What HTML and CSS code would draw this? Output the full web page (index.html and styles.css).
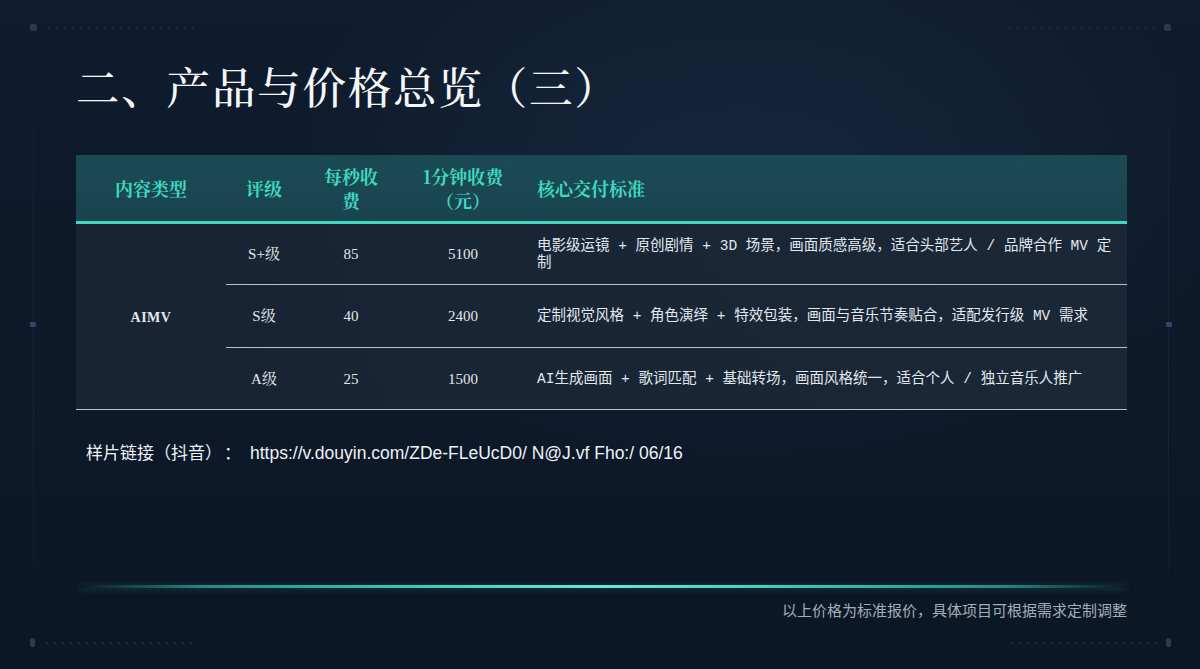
FILE: index.html
```html
<!DOCTYPE html>
<html lang="zh-CN">
<head>
<meta charset="utf-8">
<title>产品与价格总览（三）</title>
<link rel="stylesheet" href="styles.css">
</head>
<body>
<div class="slide">
  <div class="deco deco-tl"><span class="dot"></span><span class="dots"></span></div>
  <div class="deco deco-tr"><span class="dots"></span><span class="dot"></span></div>
  <div class="deco deco-bl"><span class="dot"></span><span class="dots"></span></div>
  <div class="deco deco-br"><span class="dots"></span><span class="dot"></span></div>
  <div class="vline vline-l"></div>
  <div class="vline vline-r"></div>
  <div class="side-mark side-l"></div>
  <div class="side-mark side-r"></div>

  <h1 class="title">二、产品与价格总览（三）</h1>

  <table class="price-table">
    <colgroup>
      <col class="c1"><col class="c2"><col class="c3"><col class="c4"><col class="c5">
    </colgroup>
    <thead>
      <tr>
        <th>内容类型</th>
        <th>评级</th>
        <th class="wrap">每秒收费</th>
        <th class="wrap">1分钟收费（元）</th>
        <th class="left">核心交付标准</th>
      </tr>
    </thead>
    <tbody>
      <tr>
        <td rowspan="3" class="type">AIMV</td>
        <td class="num">S+级</td>
        <td class="num">85</td>
        <td class="num">5100</td>
        <td class="desc">电影级运镜 + 原创剧情 + 3D 场景，画面质感高级，适合头部艺人 / 品牌合作 MV 定制</td>
      </tr>
      <tr>
        <td class="num">S级</td>
        <td class="num">40</td>
        <td class="num">2400</td>
        <td class="desc">定制视觉风格 + 角色演绎 + 特效包装，画面与音乐节奏贴合，适配发行级 MV 需求</td>
      </tr>
      <tr class="last">
        <td class="num">A级</td>
        <td class="num">25</td>
        <td class="num">1500</td>
        <td class="desc">AI生成画面 + 歌词匹配 + 基础转场，画面风格统一，适合个人 / 独立音乐人推广</td>
      </tr>
    </tbody>
  </table>

  <p class="sample"><span class="sample-label">样片链接（抖音）</span><span class="sample-colon">：</span><span class="sample-url">https://v.douyin.com/ZDe-FLeUcD0/ N@J.vf Fho:/ 06/16</span></p>

  <div class="spacer"></div>
  <div class="glow"></div>
  <p class="note">以上价格为标准报价，具体项目可根据需求定制调整</p>
</div>
</body>
</html>
```

FILE: styles.css
```css
* { box-sizing: border-box; }
html, body {
  margin: 0;
  padding: 0;
  background: #0d1828;
}
.slide {
  position: relative;
  width: 1200px;
  height: 669px;
  overflow: hidden;
  display: flex;
  flex-direction: column;
  padding: 0 73px 0 76px;
  background:
    radial-gradient(ellipse 700px 420px at 62% 30%, rgba(30, 52, 78, 0.5), rgba(13, 24, 40, 0) 70%),
    linear-gradient(180deg, #0f1c2d 0%, #0d1828 60%, #0c1726 100%);
  font-family: "Noto Sans CJK SC", sans-serif;
  color: #e6ebf1;
}

/* decorations */
.deco {
  position: absolute;
  display: flex;
  align-items: center;
  gap: 8px;
}
.deco .dot {
  width: 7px;
  height: 7px;
  border-radius: 2px;
  background: #2c394b;
}
.deco .dots {
  width: 150px;
  height: 2px;
  background-image: radial-gradient(circle, #1d2a3b 0.9px, transparent 1.1px);
  background-size: 8px 2px;
}
.deco-tl { left: 30px; top: 24px; }
.deco-tr { right: 29px; top: 24px; }
.deco-bl { left: 12px; top: 638px; }
.deco-br { right: 29px; top: 638px; }
.deco-bl .dot { width: 5px; height: 9px; margin-left: 18px; }
.deco-br .dot { width: 5px; height: 9px; }
.vline {
  position: absolute;
  top: 50px;
  bottom: 45px;
  width: 1px;
  background: linear-gradient(180deg, rgba(40,56,76,0), rgba(28,40,56,0.7) 30%, rgba(28,40,56,0.7) 70%, rgba(40,56,76,0));
}
.vline-l { left: 33px; }
.vline-r { right: 31px; }
.side-mark {
  position: absolute;
  top: 322px;
  width: 6px;
  height: 5px;
  border-radius: 1px;
  background: #2a4768;
}
.side-l { left: 30px; }
.side-r { right: 28px; }

/* title */
.title {
  margin: 60px 0 0 0;
  font-family: "Noto Serif CJK SC", "Noto Sans CJK SC", serif;
  font-weight: 500;
  font-size: 43.5px;
  line-height: 50px;
  color: #f4f6f8;
  letter-spacing: 1.8px;
}

/* table */
.price-table {
  margin-top: 45px;
  width: 1051px;
  border-collapse: collapse;
  table-layout: fixed;
}
.c1 { width: 150px; }
.c2 { width: 76px; }
.c3 { width: 98px; }
.c4 { width: 126px; }
.c5 { width: 601px; }

.price-table thead tr {
  background: linear-gradient(180deg, #1b4a55 0%, #19444f 100%);
}
.price-table th {
  height: 67px;
  padding: 0 6px;
  border-bottom: 3px solid #3cd8c4;
  color: #3fd8c3;
  font-family: "Noto Serif CJK SC", "Noto Sans CJK SC", serif;
  font-weight: 700;
  font-size: 18px;
  line-height: 24px;
  text-align: center;
  vertical-align: middle;
}
.price-table th.wrap { padding: 0 14px; }
.price-table th.left { text-align: left; padding-left: 11px; }

.price-table tbody tr {
  background: linear-gradient(90deg, rgba(24, 36, 52, 0.95), rgba(26, 40, 56, 0.95));
}
.price-table td {
  height: 62.5px;
  padding: 2px 6px 0;
  border-bottom: 1.5px solid #b8c1cb;
  font-family: "Liberation Mono", "Noto Sans CJK SC", monospace;
  font-size: 14.5px;
  line-height: 17px;
  color: #e3e8ee;
  text-align: center;
  vertical-align: middle;
}
.price-table td.num {
  font-family: "Liberation Serif", "Noto Serif CJK SC", "Noto Sans CJK SC", serif;
  font-size: 15px;
}
.price-table td.type {
  font-family: "Liberation Serif", "Noto Sans CJK SC", serif;
  font-weight: 700;
  font-size: 14px;
  letter-spacing: 0.5px;
}
.price-table td.desc {
  text-align: left;
  padding: 2px 10px 0 11px;
}

/* sample link */
.sample {
  margin: 31px 0 0 10px;
  line-height: 22px;
  color: #eef2f6;
  display: flex;
  align-items: baseline;
}
.sample-label {
  font-family: "Noto Sans CJK SC", sans-serif;
  font-size: 17px;
}
.sample-colon {
  font-family: "Noto Sans CJK SC", sans-serif;
  font-size: 17px;
  margin: 0 9px 0 2px;
}
.sample-url {
  font-family: "Liberation Sans", Arial, sans-serif;
  font-size: 17.5px;
}

.spacer { flex: 1; }

.glow {
  height: 3px;
  margin: 0 0 0 4px;
  background: linear-gradient(90deg, rgba(40,170,160,0) 0%, rgba(45,180,165,0.75) 12%, #3fd4c0 35%, #6ee6d8 50%, #3fd4c0 65%, rgba(45,180,165,0.75) 88%, rgba(40,170,160,0) 100%);
  box-shadow: 0 1px 6px rgba(40, 200, 185, 0.25);
}
.note {
  margin: 12px 0 49px 0;
  text-align: right;
  font-size: 15px;
  line-height: 20px;
  color: #a3adb8;
}
```
